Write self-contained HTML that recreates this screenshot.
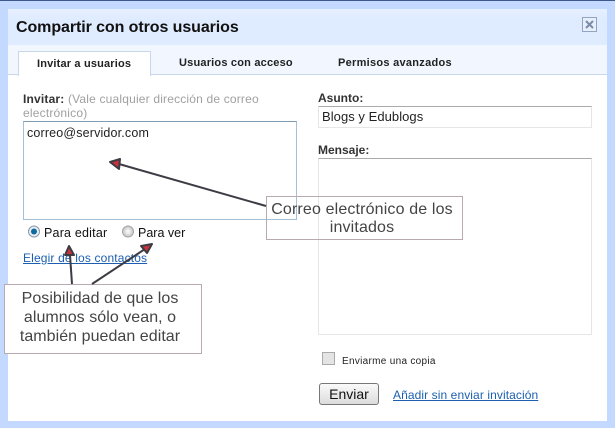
<!DOCTYPE html>
<html><head><meta charset="utf-8"><style>
html,body{margin:0;padding:0}
body{width:615px;height:428px;overflow:hidden;position:relative;background:#c3d9ff;font-family:"Liberation Sans",sans-serif;color:#000}
div,a,span{position:absolute;white-space:nowrap;box-sizing:border-box}
a{color:#1c5fb0;text-decoration:underline}
.t{font-size:12px;line-height:14px}
.b{font-weight:bold}
.c{font-size:16px;line-height:19px;color:#444;text-align:center;background:#fff;border:1px solid #b9a9b0;letter-spacing:.05px}
svg{position:absolute;left:0;top:0}
</style></head><body>
<div style="left:0;top:0;width:615px;height:1px;background:#3e5a8a"></div>
<div style="left:8px;top:9px;width:599px;height:412px;background:#fff"></div>
<div style="left:8px;top:9px;width:599px;height:36px;background:linear-gradient(#e6f0ff,#dfebff 30%,#dfebff)"></div>
<div style="left:8px;top:45px;width:599px;height:30px;background:#f1f6ff;border-bottom:1px solid #c9d7ea"></div>
<div style="left:16px;top:18px;font-size:16px;line-height:20px;font-weight:bold;color:#111;letter-spacing:-.08px">Compartir con otros usuarios</div>
<div style="left:582px;top:17px;width:15px;height:15px;border:1px solid #93a5bd;background:#e6effc"></div>
<svg width="615" height="428" style="z-index:1"><path d="M586 21l7 7M593 21l-7 7" stroke="#7c8ca6" stroke-width="2"/></svg>
<div style="left:18px;top:51px;width:133px;height:25px;background:#fff;border:1px solid #c9d7ea;border-bottom:0"></div>
<div class="b" style="left:37px;top:57px;font-size:11px;line-height:14px;letter-spacing:.17px;color:#222">Invitar a usuarios</div>
<div class="b" style="left:179px;top:56px;font-size:11px;line-height:14px;letter-spacing:.2px;color:#222">Usuarios con acceso</div>
<div class="b" style="left:338px;top:56px;font-size:11px;line-height:14px;letter-spacing:.28px;color:#222">Permisos avanzados</div>
<div class="t" style="left:23px;top:92px;color:#a0a0a0;letter-spacing:.18px"><b style="color:#333">Invitar:</b> (Vale cualquier dirección de correo</div>
<div class="t" style="left:23px;top:106px;color:#a0a0a0;letter-spacing:.2px">electrónico)</div>
<div style="left:23px;top:121px;width:274px;height:99px;border:1px solid #a3c0d8;border-top-color:#7f9db9"></div>
<div class="t" style="left:27px;top:126px;color:#222;font-size:12.5px;letter-spacing:.16px">correo@servidor.com</div>
<div class="t b" style="left:318px;top:91px;color:#333">Asunto:</div>
<div style="left:318px;top:106px;width:274px;height:22px;border:1px solid #e6e6e6;border-top-color:#aaa"></div>
<div class="t" style="left:322px;top:110px;color:#222;font-size:13px;letter-spacing:.05px">Blogs y Edublogs</div>
<div class="t b" style="left:318px;top:143px;color:#333">Mensaje:</div>
<div style="left:318px;top:158px;width:274px;height:177px;border:1px solid #e6e6e6;border-top-color:#aaa"></div>
<svg width="615" height="428" style="z-index:1">
<defs><radialGradient id="g"><stop offset="0" stop-color="#fff"/><stop offset="1" stop-color="#c4c4c4"/></radialGradient></defs>
<circle cx="34" cy="231.5" r="5.5" fill="#e8eef4" stroke="#8a99a8"/><circle cx="34" cy="231.5" r="3" fill="#0f6a9e"/>
<circle cx="128" cy="231.5" r="5.5" fill="url(#g)" stroke="#a5a5a5"/>
</svg>
<div class="t" style="left:44px;top:226px;font-size:12.5px;letter-spacing:.2px;color:#111">Para editar</div>
<div class="t" style="left:138px;top:226px;font-size:12.5px;color:#111">Para ver</div>
<a class="t" style="left:23px;top:251px;letter-spacing:.15px">Elegir de los contactos</a>
<div style="left:322px;top:352px;width:13px;height:13px;background:#e4e4e4;border:1px solid #aaa"></div>
<div style="left:342px;top:355px;font-size:10px;line-height:13px;letter-spacing:.3px;color:#222">Enviarme una copia</div>
<div style="left:319px;top:383px;width:60px;height:22px;border:1px solid #777;border-radius:3px;background:linear-gradient(#fafafa,#dcdcdc);font-size:14px;line-height:20px;text-align:center;color:#111">Enviar</div>
<a class="t" style="left:393px;top:388px;letter-spacing:.09px">Añadir sin enviar invitación</a>
<div class="c" style="left:266px;top:196px;width:197px;height:44px;padding:4px 5px 0 0;line-height:18px;letter-spacing:.15px;background:transparent;z-index:2">Correo electrónico de los<br>invitados</div>
<div class="c" style="left:4px;top:284px;width:198px;height:70px;padding:4px 6px 0 0;z-index:2">Posibilidad de que los<br>alumnos sólo vean, o<br>también puedan editar</div>
<svg width="615" height="428" style="z-index:3">
<g stroke="#3c3c44" stroke-width="2" fill="#c8323c" stroke-linejoin="round">
<path d="M266 206L119 164" fill="none"/><path d="M110 162l10-3-1 10z"/>
<path d="M72 284L70 255" fill="none"/><path d="M69 246l5 9h-9z"/>
<path d="M92 284L145 249" fill="none"/><path d="M152 244l-11 2 6 7z"/>
</g></svg>
</body></html>
